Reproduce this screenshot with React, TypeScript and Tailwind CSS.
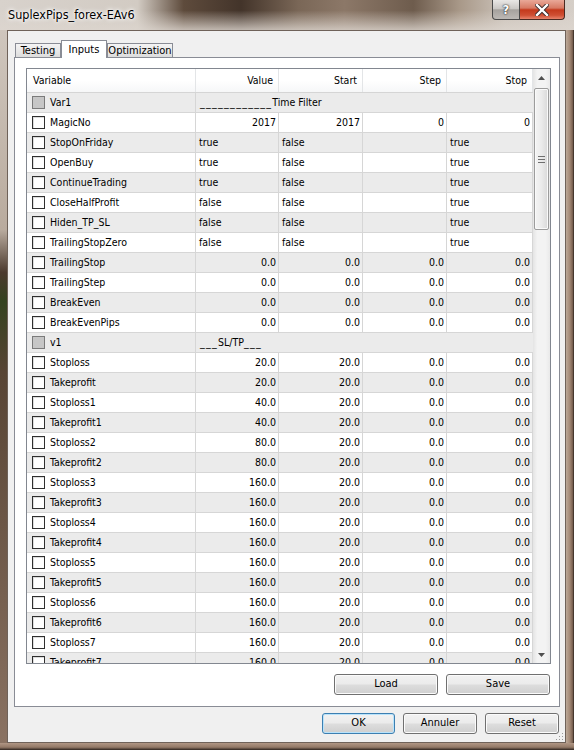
import React from "react";

type Row =
  | { name: string; group: string }
  | { name: string; v: string[]; left?: boolean };

const sl = (name: string, value: string): Row => ({ name, v: [value, "20.0", "0.0", "0.0"] });
const zero = (name: string): Row => ({ name, v: ["0.0", "0.0", "0.0", "0.0"] });
const flag = (name: string, value: string): Row => ({ name, v: [value, "false", "", "true"], left: true });

const rows: Row[] = [
  { name: "Var1", group: "____________Time Filter" },
  { name: "MagicNo", v: ["2017", "2017", "0", "0"] },
  flag("StopOnFriday", "true"),
  flag("OpenBuy", "true"),
  flag("ContinueTrading", "true"),
  flag("CloseHalfProfit", "false"),
  flag("Hiden_TP_SL", "false"),
  flag("TrailingStopZero", "false"),
  zero("TrailingStop"),
  zero("TrailingStep"),
  zero("BreakEven"),
  zero("BreakEvenPips"),
  { name: "v1", group: "___SL/TP___" },
  sl("Stoploss", "20.0"),
  sl("Takeprofit", "20.0"),
  sl("Stoploss1", "40.0"),
  sl("Takeprofit1", "40.0"),
  sl("Stoploss2", "80.0"),
  sl("Takeprofit2", "80.0"),
  sl("Stoploss3", "160.0"),
  sl("Takeprofit3", "160.0"),
  sl("Stoploss4", "160.0"),
  sl("Takeprofit4", "160.0"),
  sl("Stoploss5", "160.0"),
  sl("Takeprofit5", "160.0"),
  sl("Stoploss6", "160.0"),
  sl("Takeprofit6", "160.0"),
  sl("Stoploss7", "160.0"),
  sl("Takeprofit7", "160.0"),
];

const cols = ["w-[83px]", "w-[84px]", "w-[84px]", "w-[86px]"];

// underscores are wider in the original font, so stretch them a bit
const GroupLabel = ({ text }: { text: string }) => (
  <span>
    {text.split(/(_+)/).map((part, k) =>
      part.startsWith("_") ? (
        <span key={k} className="tracking-[1.3px]">
          {part}
        </span>
      ) : (
        <span key={k}>{part}</span>
      )
    )}
  </span>
);

const Button = ({ label, w, primary }: { label: string; w: string; primary?: boolean }) => (
  <div
    className={`${w} h-[21px] flex items-center justify-center rounded-[3px] border text-[11px] text-black bg-[image:linear-gradient(180deg,#f2f2f2_0%,#ebebeb_48%,#dddddd_52%,#cfcfcf_100%)] ${
      primary
        ? "border-[#3c7fb1] shadow-[inset_0_0_0_1px_#b9e3fb]"
        : "border-[#707070] shadow-[inset_0_0_0_1px_#fbfbfb]"
    }`}
  >
    {label}
  </div>
);

const Check = ({ disabled }: { disabled?: boolean }) => (
  <div
    className={`w-[13px] h-[13px] shrink-0 border ${
      disabled ? "border-[#7a7a7a] bg-[#c6c6c6]" : "border-[#2f2f2f] bg-white shadow-[inset_1px_1px_0_#dcdcdc]"
    }`}
  />
);

const Arrow = ({ down }: { down?: boolean }) => (
  <div className="h-[17px] flex items-center justify-center">
    <svg width="7" height="4" viewBox="0 0 7 4">
      <path d={down ? "M0 0H7L3.5 4Z" : "M0 4H7L3.5 0Z"} fill="#505050" />
    </svg>
  </div>
);

const Scrollbar = () => (
  <div className="w-[17px] h-full flex flex-col bg-[image:linear-gradient(90deg,#e4e4e4_0%,#f3f3f3_25%,#f3f3f3_75%,#e9e9e9_100%)]">
    <Arrow />
    <div className="flex-1 flex flex-col">
      <div className="mt-[2px] ml-[1px] w-[15px] h-[142px] rounded-[2px] border border-[#9c9c9c] bg-[image:linear-gradient(90deg,#f4f4f4_0%,#ebebeb_50%,#d9d9d9_100%)] shadow-[inset_0_0_0_1px_#fafafa] flex flex-col items-center justify-center gap-[2px]">
        <div className="w-[7px] h-[1px] bg-[#6f6f6f]" />
        <div className="w-[7px] h-[1px] bg-[#6f6f6f]" />
        <div className="w-[7px] h-[1px] bg-[#6f6f6f]" />
      </div>
    </div>
    <Arrow down />
  </div>
);

const ListRow = ({ row, i }: { row: Row; i: number }) => {
  const bg = i % 2 === 0 ? "bg-[#ebebeb]" : "bg-white";
  return (
    <div className={`flex h-[20px] shrink-0 border-b border-[#d6d6d6] ${bg}`}>
      <div className="w-[169px] border-r border-[#d6d6d6] flex items-center pl-[5px] gap-[5px]">
        <Check disabled={"group" in row} />
        <span>{row.name}</span>
      </div>
      {"group" in row ? (
        <div className="flex-1 flex items-center pl-[4px]">
          <GroupLabel text={row.group} />
        </div>
      ) : (
        row.v.map((val, k) => (
          <div
            key={k}
            className={`${cols[k]} border-r border-[#d6d6d6] flex items-center ${
              row.left ? "justify-start pl-[3px]" : "justify-end pr-[2px]"
            }`}
          >
            {val}
          </div>
        ))
      )}
    </div>
  );
};

const Header = () => (
  <div className="flex h-[24px] shrink-0 border-b border-[#d5d5d5] bg-[image:linear-gradient(180deg,#ffffff_0%,#ffffff_50%,#f6f7f8_100%)]">
    <div className="w-[169px] border-r border-[#e3e5e7] flex items-center pl-[6px]">Variable</div>
    {["Value", "Start", "Step", "Stop"].map((h, k) => (
      <div key={h} className={`${cols[k]} border-r border-[#e3e5e7] flex items-center justify-end pr-[5px]`}>
        {h}
      </div>
    ))}
  </div>
);

const Tab = ({ label, active, w }: { label: string; active?: boolean; w: string }) =>
  active ? (
    <div className={`${w} relative z-10 h-[18px] border border-b-0 border-[#898c95] bg-white flex justify-center pt-[1px] text-[11px]`}>
      {label}
    </div>
  ) : (
    <div
      className={`${w} h-[15px] border border-[#898c95] bg-[image:linear-gradient(180deg,#f4f4f4_0%,#e9e9e9_50%,#dcdcdc_100%)] flex justify-center leading-[14px] text-[11px]`}
    >
      {label}
    </div>
  );

export default function App() {
  return (
    <div className="w-[574px] h-[750px] flex flex-col bg-stone-500 font-['DejaVu_Sans_Condensed','DejaVu_Sans',sans-serif] text-[10.5px] text-black overflow-hidden">
      {/* title bar: blurred aero glass */}
      <div className="h-[30px] shrink-0 bg-[image:linear-gradient(90deg,#d8d2cc_0%,#d2cbc3_24%,#5e4b3c_32%,#43342a_42%,#7a6757_52%,#8c7868_60%,#6e5c4d_72%,#a89888_80%,#cbc2b9_88%,#d6cfc8_100%)]">
        <div className="h-full pl-[8px] pr-[9px] flex items-start bg-[image:linear-gradient(180deg,#ddd6cf00_0%,#ddd6cf00_35%,#ddd6cfcc_100%)]">
          <div className="pt-[6px] text-[12.5px] [text-shadow:0_0_6px_#fff,0_0_4px_#fff,0_0_2px_#fff]">SuplexPips_forex-EAv6</div>
          <div className="ml-auto flex">
            <div className="w-[28px] h-[20px] rounded-bl-[4px] border border-t-0 border-[#4a4a4a] bg-[image:linear-gradient(180deg,#e9e7e5_0%,#cbc8c5_45%,#a6a29e_52%,#bdb9b5_100%)] flex items-center justify-center font-bold text-white text-[13px] [text-shadow:0_0_2px_#222,0_0_1px_#222]">
              ?
            </div>
            <div className="w-[45px] h-[20px] rounded-br-[4px] border border-l-0 border-t-0 border-[#4a2a22] bg-[image:linear-gradient(180deg,#e9a898_0%,#d77a64_42%,#c4391c_52%,#cf4f33_80%,#e7846c_100%)] flex items-center justify-center">
              <svg width="14" height="12" viewBox="0 0 14 12">
                <path d="M2 1L12 11M12 1L2 11" stroke="#3a2a2a" strokeWidth="4.2" strokeLinecap="square" />
                <path d="M2 1L12 11M12 1L2 11" stroke="#fff" strokeWidth="2.4" strokeLinecap="square" />
              </svg>
            </div>
          </div>
        </div>
      </div>

      <div className="flex-1 flex">
        {/* left frame */}
        <div className="w-[7px] shrink-0 bg-[image:linear-gradient(180deg,#cfc6bd_0%,#b9ab9e_28%,#4b3a2e_34%,#34421f_38%,#574434_48%,#8a7262_100%)]" />

        {/* client area */}
        <div className="relative w-[559px] shrink-0 border border-[#6f6259] bg-[#f0f0f0] flex flex-col">
          <div className="mt-[9px] ml-[7px] h-[18px] flex items-end">
            <Tab label="Testing" w="w-[46px]" />
            <Tab label="Inputs" w="w-[46px]" active />
            <Tab label="Optimization" w="w-[66px]" />
          </div>
          <div className="-mt-px ml-[6px] w-[546px] h-[650px] border border-[#898c95] bg-white pt-[10px] pl-[11px]">
            <div className="w-[525px] h-[596px] border border-[#828790] flex">
              <div className="w-[506px] h-full flex flex-col overflow-hidden">
                <Header />
                {rows.map((r, i) => (
                  <ListRow key={r.name} row={r} i={i} />
                ))}
              </div>
              <Scrollbar />
            </div>
            <div className="w-[525px] mt-[10px] pr-[1px] flex justify-end gap-[8px]">
              <Button label="Load" w="w-[104px]" />
              <Button label="Save" w="w-[104px]" />
            </div>
          </div>
          <div className="mt-[6px] pr-[6px] flex justify-end gap-[8px]">
            <Button label="OK" w="w-[73px]" primary />
            <Button label="Annuler" w="w-[74px]" />
            <Button label="Reset" w="w-[74px]" />
          </div>
          <svg className="absolute right-[1px] bottom-[1px]" width="8" height="8" viewBox="0 0 8 8">
            <rect x="6" y="0" width="1" height="1" fill="#9a9a9a" />
            <rect x="3" y="3" width="1" height="1" fill="#9a9a9a" />
            <rect x="6" y="3" width="1" height="1" fill="#9a9a9a" />
            <rect x="0" y="6" width="1" height="1" fill="#9a9a9a" />
            <rect x="3" y="6" width="1" height="1" fill="#9a9a9a" />
            <rect x="6" y="6" width="1" height="1" fill="#9a9a9a" />
          </svg>
        </div>

        {/* right frame */}
        <div className="flex-1 bg-[image:linear-gradient(90deg,#bca998_0%,#a58b78_45%,#7d6454_80%,#2e241e_100%)]" />
      </div>

      {/* bottom frame */}
      <div className="h-[7px] shrink-0 bg-[image:linear-gradient(180deg,#b09684_0%,#937967_60%,#2e241e_100%)]" />
    </div>
  );
}
